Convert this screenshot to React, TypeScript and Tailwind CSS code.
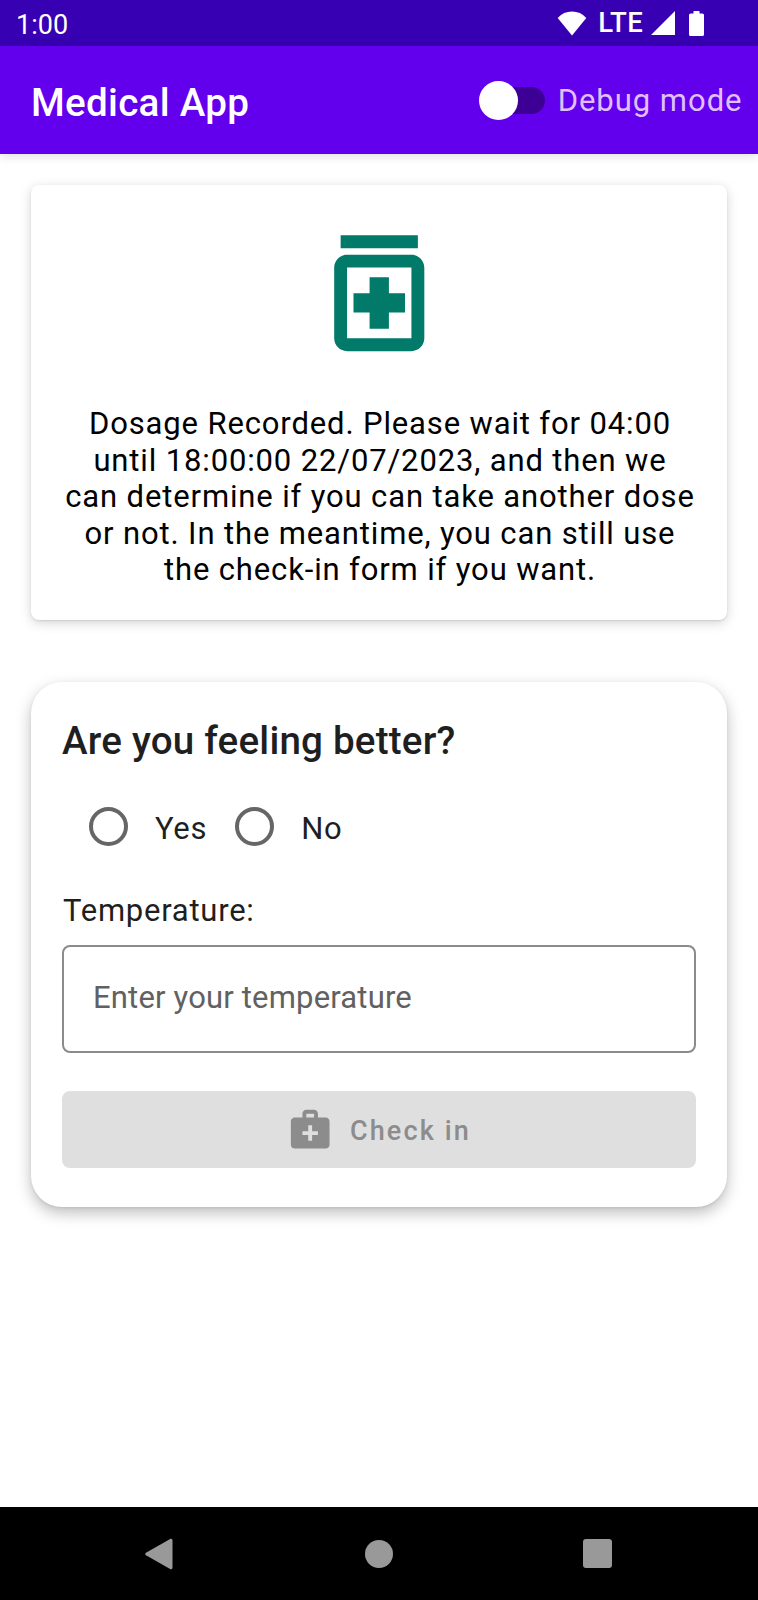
import { useState } from "react";

function StatusBar() {
  return (
    <div className="flex h-[46px] shrink-0 items-center justify-between bg-[#3700b3] pl-[16px] pr-[54px] text-[27px] text-white">
      <span className="pt-[5px] leading-none">1:00</span>
      <div className="flex items-center">
        <svg className="h-[25px] w-[30px]" viewBox="0 0 30 25" fill="currentColor">
          <path d="M0.7 7Q6.5 0.6 15 0.6T29.3 7L15 24.6Z" />
        </svg>
        <span className="ml-[11px] text-[27.5px] leading-none font-medium tracking-[0.3px]">LTE</span>
        <svg className="ml-[8px] h-[24px] w-[24px]" viewBox="0 0 24 24" fill="currentColor">
          <path d="M0 24L24 0V24Z" />
        </svg>
        <svg className="ml-[14px] h-[25px] w-[15px]" viewBox="0 0 15 25" fill="currentColor">
          <path d="M4.5 0H10.5V2.4H13.4Q15 2.4 15 4V23.4Q15 25 13.4 25H1.6Q0 25 0 23.4V4Q0 2.4 1.6 2.4H4.5Z" />
        </svg>
      </div>
    </div>
  );
}

function AppBar() {
  const [debug, setDebug] = useState(false);
  return (
    <header className="z-10 flex h-[108px] shrink-0 items-center justify-between bg-[#6200ee] pl-[31px] pr-[15.5px] shadow-[0_2px_10px_rgba(0,0,0,0.13)]">
      <h1 className="pt-[5px] text-[38.6px] leading-[46px] font-medium tracking-[0.29px] text-white">Medical App</h1>
      <button className="flex items-center" role="switch" aria-checked={debug} onClick={() => setDebug(!debug)}>
        <span className={`flex h-[27px] w-[66px] items-center rounded-full bg-[#3d0094] ${debug ? "justify-end" : ""}`}>
          <span className="size-[39px] rounded-full bg-white" />
        </span>
        <span className="ml-[12.5px] pt-px text-[31px] leading-[36px] tracking-[0.97px] text-[#e0bfff]">Debug mode</span>
      </button>
    </header>
  );
}

function DosageCard() {
  return (
    <section className="flex h-[434.5px] flex-col items-center rounded-[8px] bg-white pt-[31px] shadow-[0_3px_12px_rgba(0,0,0,0.17),0_1px_2px_rgba(0,0,0,0.1)]">
      <svg className="size-[154.5px] shrink-0" viewBox="0 0 24 24" fill="#017a69">
        <path d="M6 3h12v2H6z" />
        <path d="M17 6H7c-1.1 0-2 .9-2 2v11c0 1.1.9 2 2 2h10c1.1 0 2-.9 2-2V8c0-1.1-.9-2-2-2zm0 13H7V8h10v11z" />
        <path d="M10.5 9.5h3V12H16v3h-2.5v2.5h-3V15H8v-3h2.5z" />
      </svg>
      <p className="mt-[35.5px] pl-[2px] text-center text-[31px] leading-[36.5px] tracking-[0.86px] text-black">
        Dosage Recorded. Please wait for 04:00
        <br />
        until 18:00:00 22/07/2023, and then we
        <br />
        can determine if you can take another dose
        <br />
        or not. In the meantime, you can still use
        <br />
        the check-in form if you want.
      </p>
    </section>
  );
}

function RadioOption({ label, selected, onSelect }: { label: string; selected: boolean; onSelect: () => void }) {
  return (
    <button className="flex items-center" role="radio" aria-checked={selected} onClick={onSelect}>
      <span className="flex size-[39px] items-center justify-center rounded-full border-4 border-[#666666]">
        {selected && <span className="size-[19px] rounded-full bg-[#666666]" />}
      </span>
      <span className="ml-[27px] pt-[4px] text-[31px] leading-[36px] tracking-[0.7px]">{label}</span>
    </button>
  );
}

function CheckInCard() {
  const [answer, setAnswer] = useState("");
  return (
    <section className="mt-[62px] flex h-[525.5px] flex-col rounded-[31px] bg-white px-[31px] text-[#1f1f1f] shadow-[0_6px_15px_rgba(0,0,0,0.26),0_1px_3px_rgba(0,0,0,0.08)]">
      <h2 className="mt-[36.5px] text-[38.6px] leading-[46px] font-medium tracking-[0.2px]">Are you feeling better?</h2>
      <div className="mt-[43px] flex h-[39px] items-center gap-[28px] pl-[27px]" role="radiogroup">
        <RadioOption label="Yes" selected={answer === "yes"} onSelect={() => setAnswer("yes")} />
        <RadioOption label="No" selected={answer === "no"} onSelect={() => setAnswer("no")} />
      </div>
      <label htmlFor="temperature" className="mt-[47px] pl-px text-[31px] leading-[36px] tracking-[0.75px]">
        Temperature:
      </label>
      <input
        id="temperature"
        placeholder="Enter your temperature"
        className="mt-[15.5px] h-[108px] shrink-0 rounded-[8px] border-2 border-[#8b8b8b] px-[29px] pb-[2px] text-[31px] tracking-[0.17px] outline-none placeholder:text-[#616161]"
      />
      <button className="mt-[38.5px] flex h-[77px] shrink-0 items-center justify-center rounded-[8px] bg-[#dfdfdf] text-[#8c8c8c]" disabled>
        <svg className="size-[46.4px]" viewBox="0 0 24 24" fill="currentColor">
          <path
            fillRule="evenodd"
            d="M20 6h-4V4c0-1.1-.9-2-2-2h-4c-1.1 0-2 .9-2 2v2H4c-1.1 0-2 .9-2 2v12c0 1.1.9 2 2 2h16c1.1 0 2-.9 2-2V8c0-1.1-.9-2-2-2zM10 4h4v2h-4zM16 15h-3v3h-2v-3H8v-2h3v-3h2v3h3z"
          />
        </svg>
        <span className="ml-[16.5px] pt-[2px] text-[27px] leading-[32px] font-medium tracking-[2.15px]">Check in</span>
      </button>
    </section>
  );
}

function NavigationBar() {
  return (
    <nav className="flex h-[93px] shrink-0 items-center justify-between bg-black pl-[144.5px] pr-[146.5px] text-[#999999]">
      <svg className="h-[32px] w-[28px]" viewBox="0 0 29 32" fill="currentColor">
        <path d="M1 14.6L26.5 0.3Q28.5 -0.3 28.5 2V30Q28.5 32.3 26.5 31.7L1 17.4Q-0.6 16 1 14.6Z" />
      </svg>
      <span className="ml-[2px] size-[28px] rounded-full bg-[#999999]" />
      <span className="size-[29px] rounded-[3px] bg-[#999999]" />
    </nav>
  );
}

export default function App() {
  return (
    <div className="flex h-[1600px] w-[758px] flex-col bg-white font-['Roboto',sans-serif]">
      <StatusBar />
      <AppBar />
      <main className="flex flex-1 flex-col px-[31px] pt-[31px]">
        <DosageCard />
        <CheckInCard />
      </main>
      <NavigationBar />
    </div>
  );
}
